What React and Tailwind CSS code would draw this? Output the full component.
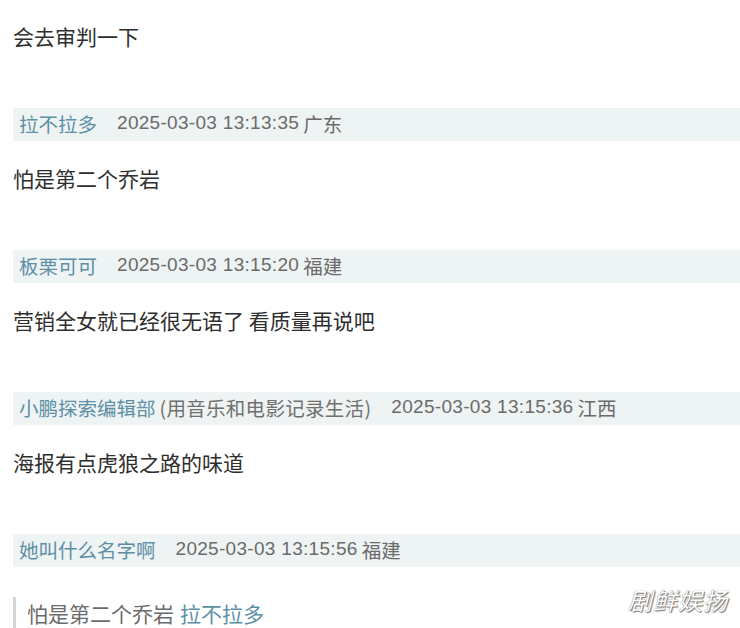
const comments = [
  { name: '拉不拉多', time: '2025-03-03 13:13:35', place: '广东', text: '怕是第二个乔岩' },
  { name: '板栗可可', time: '2025-03-03 13:15:20', place: '福建', text: '营销全女就已经很无语了 看质量再说吧' },
  { name: '小鹏探索编辑部', note: '(用音乐和电影记录生活)', time: '2025-03-03 13:15:36', place: '江西', text: '海报有点虎狼之路的味道' },
];

const font = { fontFamily: '"Microsoft YaHei", "Noto Sans CJK SC", "Liberation Sans", sans-serif' };

const Header = ({ name, note, time, place }) => (
  <div className="mt-[58px] h-[33px] bg-[#eef3f3] flex items-center pl-[6px] pb-[2px] text-[19.5px] whitespace-nowrap">
    <span className="text-[#5d8fa6]">{name}</span>
    {note && <span className="text-[#707070] tracking-[0.3px] ml-[4px]">{note}</span>}
    <span className="text-[#6b6b6b] ml-[20px] text-[19px] tracking-[0.3px] font-['Liberation_Sans']">{time}</span>
    <span className="text-[#6b6b6b] ml-[4px]">{place}</span>
  </div>
);

export default function App() {
  return (
    <div className="relative w-[740px] h-[628px] overflow-hidden bg-white pl-[13px] pt-[22px]" style={font}>
      <p className="text-[21px] leading-[28px] text-[#2e2e2e]">会去审判一下</p>
      {comments.map((c, i) => (
        <div key={i}>
          <Header {...c} />
          <p className="mt-[23px] text-[21px] leading-[28px] text-[#2e2e2e]">{c.text}</p>
        </div>
      ))}
      <Header name="她叫什么名字啊" time="2025-03-03 13:15:56" place="福建" />
      <div className="mt-[30px] border-l-[3px] border-[#d4d4d4] pl-[11px] h-[34px] flex items-center text-[21px]">
        <span className="text-[#6b6b6b]">怕是第二个乔岩</span>
        <span className="text-[#5d8fa6] ml-[6px]">拉不拉多</span>
      </div>
      <div className="absolute right-[12px] top-[582px] text-[24px] text-white italic tracking-[1px] [text-shadow:0_0_1px_#555,1px_1px_1px_#777]">
        剧鲜娱扬
      </div>
    </div>
  );
}
